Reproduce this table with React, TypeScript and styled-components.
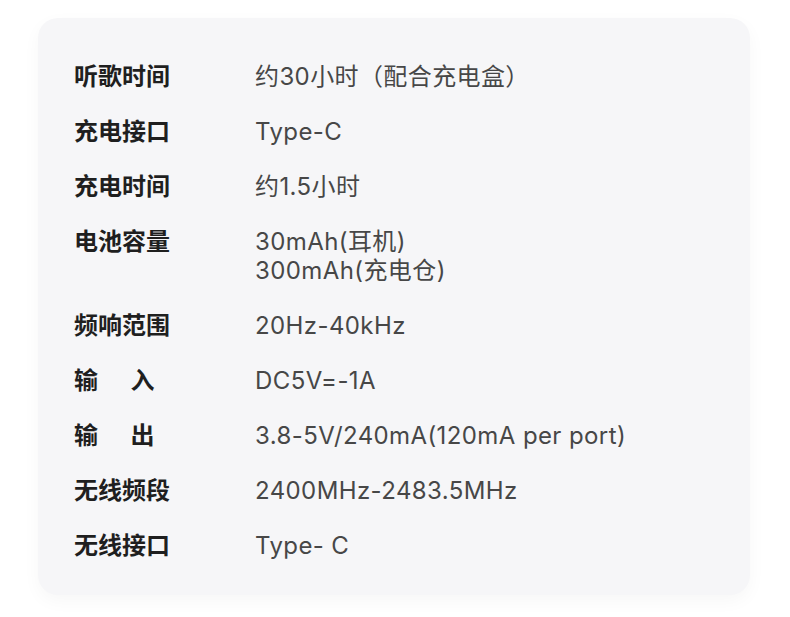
import React from 'react'
import styled, { createGlobalStyle } from 'styled-components'

const GlobalStyle = createGlobalStyle`
  html, body {
    margin: 0;
    padding: 0;
    background: #ffffff;
  }
  body {
    font-family: "Noto Sans CJK SC", "Noto Sans", sans-serif;
  }
`

// Outer page area
const SPage = styled.div`
  width: 790px;
  height: 617px;
  padding: 18px 40px 22px 38px;
  box-sizing: border-box;
`

// Light grey spec card
const SCard = styled.div`
  height: 100%;
  box-sizing: border-box;
  background: #f6f6f8;
  border-radius: 20px;
  box-shadow: 0 6px 18px rgba(0, 0, 0, 0.035);
  padding: 42px 36px 0 36px;
  display: grid;
  grid-template-columns: 181px 1fr;
  row-gap: 24px;
  align-content: start;
  align-items: baseline;
`

const SLabel = styled.div<{ $spread?: boolean }>`
  font-size: 24px;
  line-height: 29px;
  font-weight: 700;
  color: #1f1f1f;
  white-space: pre;
  word-spacing: ${props => (props.$spread ? '27px' : 'normal')};
`

const SValue = styled.div`
  font-family: "Inter", "Noto Sans CJK SC", sans-serif;
  font-size: 24px;
  line-height: 29px;
  font-weight: 400;
  letter-spacing: 0.4px;
  color: #474747;
`

const SLine = styled.div``

const specs = [
  { label: '听歌时间', value: ['约30小时（配合充电盒）'] },
  { label: '充电接口', value: ['Type-C'] },
  { label: '充电时间', value: ['约1.5小时'] },
  { label: '电池容量', value: ['30mAh(耳机)', '300mAh(充电仓)'] },
  { label: '频响范围', value: ['20Hz-40kHz'] },
  { label: '输 入', value: ['DC5V=-1A'], spread: true },
  { label: '输 出', value: ['3.8-5V/240mA(120mA per port)'], spread: true },
  { label: '无线频段', value: ['2400MHz-2483.5MHz'] },
  { label: '无线接口', value: ['Type- C'] },
]

export default function App() {
  return (
    <>
      <GlobalStyle />
      <SPage>
        <SCard>
          {specs.map(spec => (
            <React.Fragment key={spec.label}>
              <SLabel $spread={spec.spread}>{spec.label}</SLabel>
              <SValue>
                {spec.value.map(line => (
                  <SLine key={line}>{line}</SLine>
                ))}
              </SValue>
            </React.Fragment>
          ))}
        </SCard>
      </SPage>
    </>
  )
}
